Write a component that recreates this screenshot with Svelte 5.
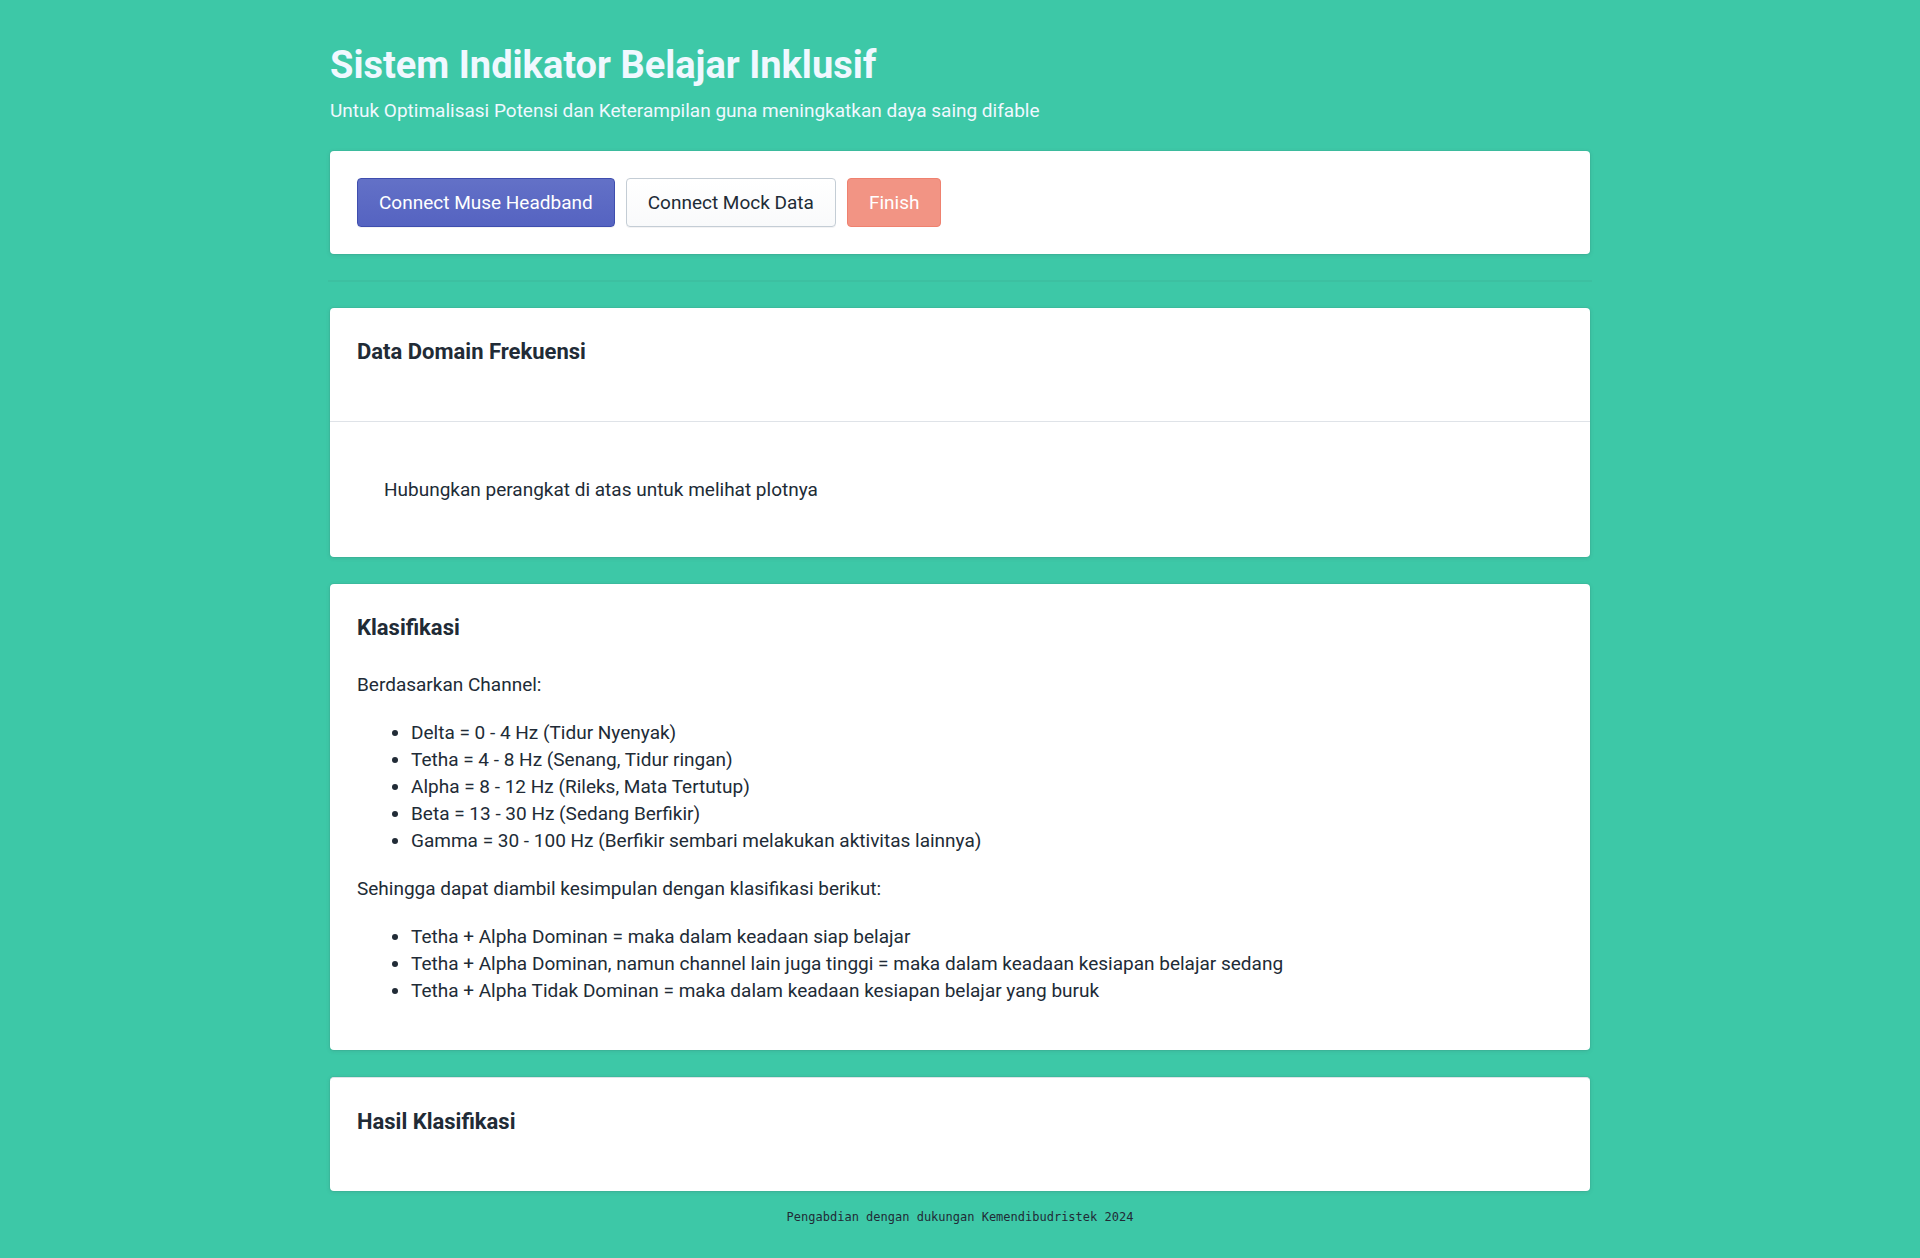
<script>
  const channels = [
    'Delta = 0 - 4 Hz (Tidur Nyenyak)',
    'Tetha = 4 - 8 Hz (Senang, Tidur ringan)',
    'Alpha = 8 - 12 Hz (Rileks, Mata Tertutup)',
    'Beta = 13 - 30 Hz (Sedang Berfikir)',
    'Gamma = 30 - 100 Hz (Berfikir sembari melakukan aktivitas lainnya)'
  ];
  const conclusions = [
    'Tetha + Alpha Dominan = maka dalam keadaan siap belajar',
    'Tetha + Alpha Dominan, namun channel lain juga tinggi = maka dalam keadaan kesiapan belajar sedang',
    'Tetha + Alpha Tidak Dominan = maka dalam keadaan kesiapan belajar yang buruk'
  ];
</script>

<div class="page">
  <header>
    <h1>Sistem Indikator Belajar Inklusif</h1>
    <p>Untuk Optimalisasi Potensi dan Keterampilan guna meningkatkan daya saing difable</p>
  </header>

  <main>
    <section class="card actions">
      <button type="button" class="primary">Connect Muse Headband</button>
      <button type="button">Connect Mock Data</button>
      <button type="button" class="danger" disabled>Finish</button>
    </section>

    <hr />

    <section class="card">
      <div class="section heading-only">
        <h2>Data Domain Frekuensi</h2>
      </div>
      <div class="section plot">
        <p>Hubungkan perangkat di atas untuk melihat plotnya</p>
      </div>
    </section>

    <section class="card section">
      <h2>Klasifikasi</h2>
      <div class="copy">
        <p>Berdasarkan Channel:</p>
        <ul>
          {#each channels as item}<li>{item}</li>{/each}
        </ul>
        <p>Sehingga dapat diambil kesimpulan dengan klasifikasi berikut:</p>
        <ul>
          {#each conclusions as item}<li>{item}</li>{/each}
        </ul>
      </div>
    </section>

    <section class="card section heading-only">
      <h2>Hasil Klasifikasi</h2>
    </section>
  </main>

  <footer>Pengabdian dengan dukungan Kemendibudristek 2024</footer>
</div>

<style>
  :global(body) {
    background: #3dc8a7;
  }
  .page {
    box-sizing: border-box;
    max-width: 1346px;
    margin: 0 auto;
    padding: 38px 43px 30px;
    font: 400 19px/27px Roboto, sans-serif;
    color: #212b36;
  }
  h1,
  h2,
  p,
  ul {
    margin: 0;
  }
  header {
    color: #f0f8ff;
    margin-bottom: 27px;
  }
  h1 {
    font-size: 38px;
    line-height: 54px;
    font-weight: 700;
    margin-bottom: 5px;
  }
  h2 {
    font-size: 22px;
    line-height: 33px;
    font-weight: 700;
  }
  .card {
    background: #fff;
    border-radius: 4px;
    box-shadow: 0 0 0 1px rgba(63, 63, 68, 0.05), 0 1px 4px rgba(63, 63, 68, 0.15);
    margin-bottom: 27px;
  }
  .section {
    padding: 27px;
  }
  .section + .section {
    border-top: 1px solid #dfe3e8;
  }
  .heading-only {
    padding-bottom: 53px;
  }
  .plot {
    padding: 54px;
  }
  .actions {
    display: flex;
    flex-wrap: wrap;
    gap: 11px;
    padding: 27px;
    margin: 0;
  }
  button {
    font: inherit;
    line-height: 27px;
    padding: 10px 21px;
    color: #212b36;
    background: linear-gradient(to bottom, #fff, #f9fafb);
    border: 1px solid #c4cdd5;
    border-radius: 4px;
    box-shadow: 0 1px 0 rgba(22, 29, 37, 0.05);
  }
  .primary {
    color: #fff;
    background: linear-gradient(to bottom, #6371c7, #5563c1);
    border-color: #3f4eae;
  }
  .danger {
    color: #fff;
    background: #f29484;
    border-color: #ef816f;
    box-shadow: none;
  }
  hr {
    height: 2px;
    margin: 26px -2px;
    border: 0;
    background: #3dc0a1;
  }
  .copy {
    margin-top: 27px;
  }
  ul {
    margin: 21px 0;
    padding-left: 54px;
  }
  ul:last-child {
    margin-bottom: 19px;
  }
  footer {
    text-align: center;
    font-family: "DejaVu Sans Mono", monospace;
    font-size: 12px;
  }
  main > .card:last-child {
    margin-bottom: 13px;
  }
</style>
